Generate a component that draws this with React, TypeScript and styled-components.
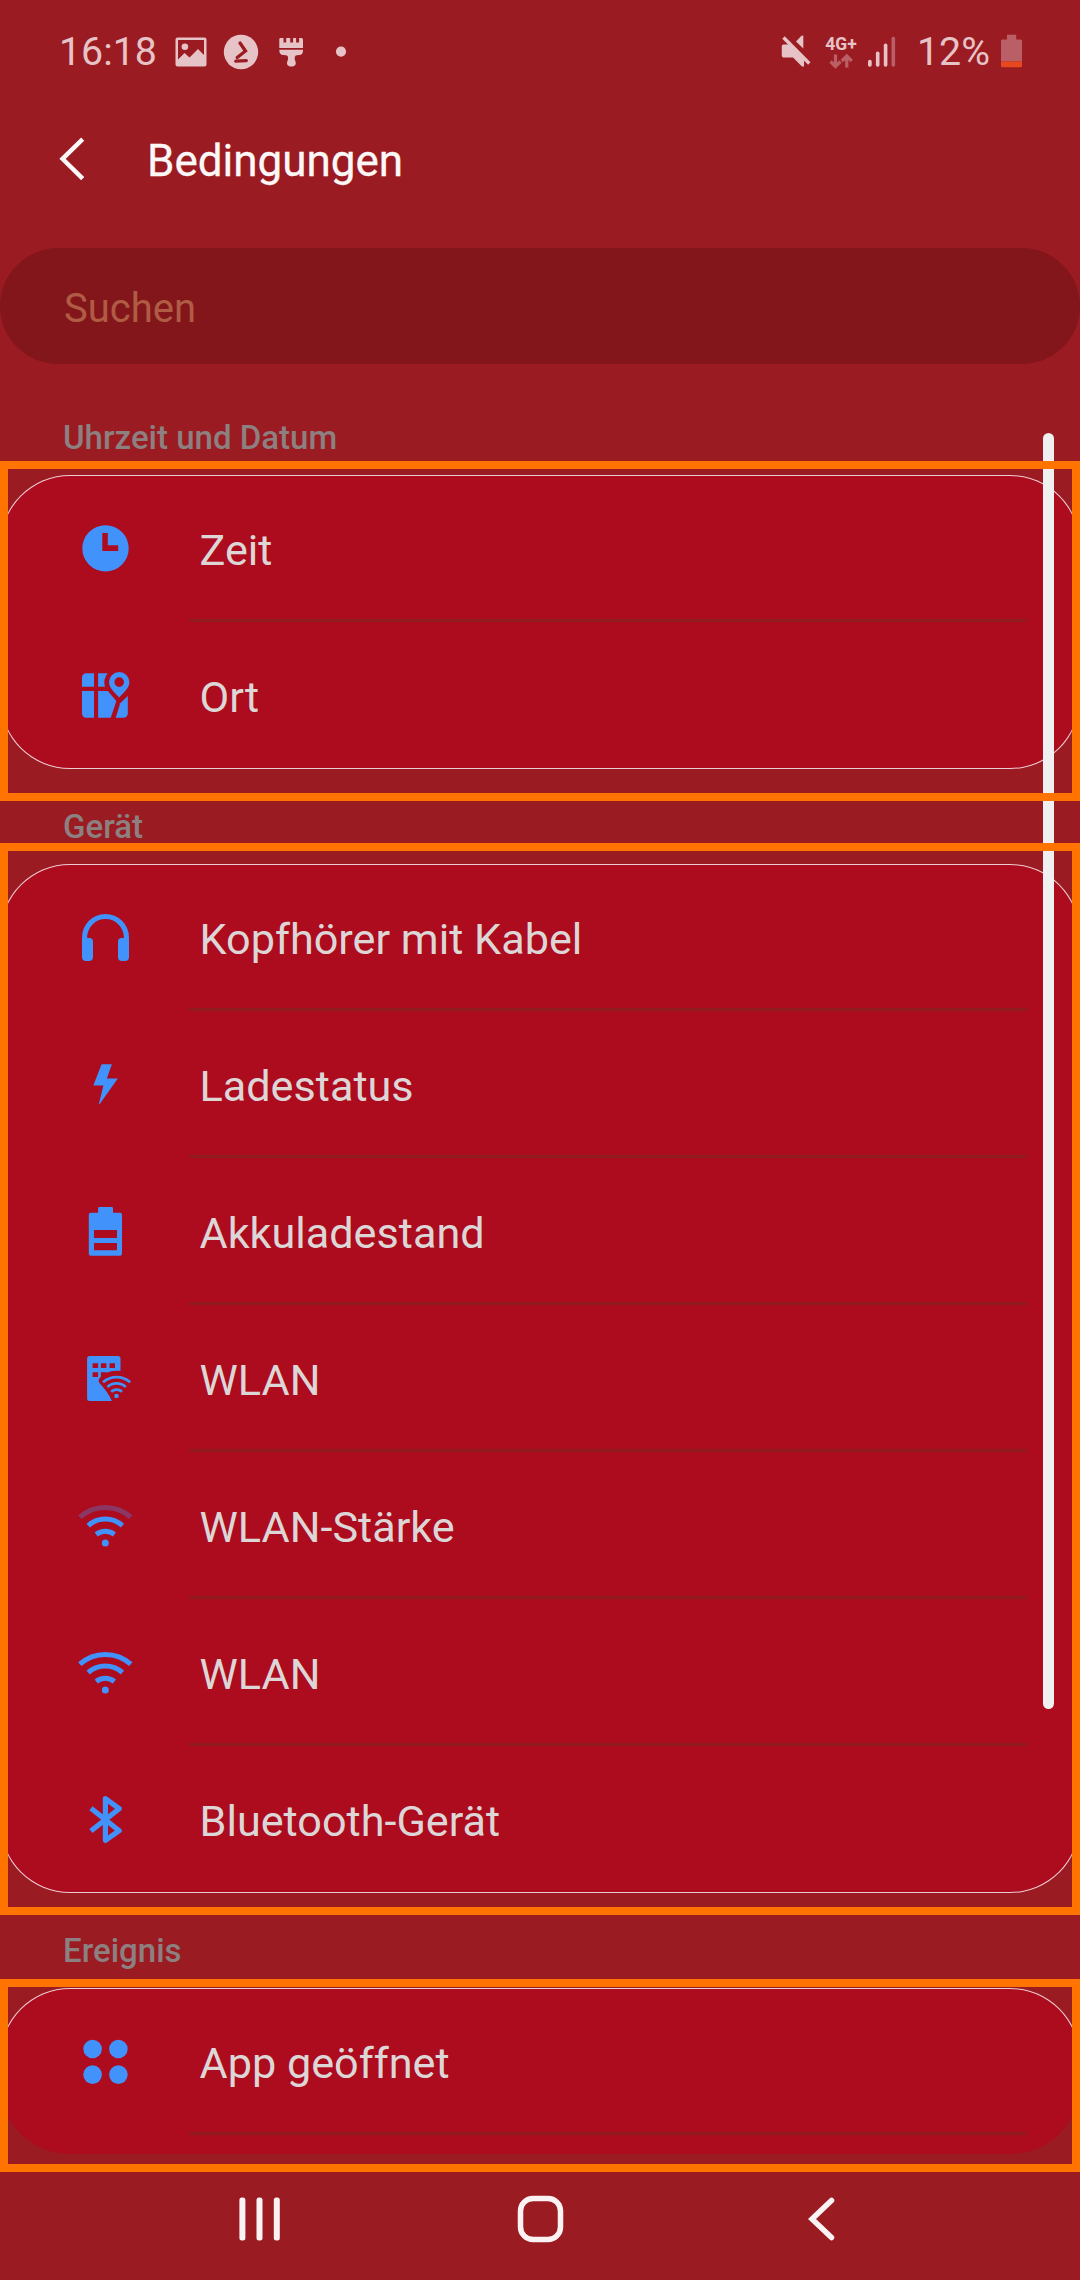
import React from "react";
import styled, { createGlobalStyle } from "styled-components";

const color = {
  page: "#9b1b22",
  card: "#ad0b1e",
  search: "#82161b",
  hint: "#b05c44",
  section: "#8c8080",
  label: "#dcd6d6",
  icon: "#4192fa",
  divider: "#901b20",
  outline: "#ecced2",
  status: "#e6c3c6",
  statusDim: "#bb5f66",
  frame: "#ff7300",
};

const GlobalStyle = createGlobalStyle`
  * { box-sizing: border-box; }
  body { margin: 0; background: ${color.page}; }
`;

const Screen = styled.div`
  width: 1080px;
  height: 2280px;
  display: flex;
  flex-direction: column;
  overflow: hidden;
  background: ${color.page};
  font-family: Roboto, "Noto Sans", sans-serif;
`;

const StatusBar = styled.header`
  height: 103px;
  flex: none;
  display: flex;
  align-items: center;
  justify-content: space-between;
  padding: 0 58px 0 59px;
  color: ${color.status};
  font-size: 39.3px;
  line-height: 47px;
`;

const StatusGroup = styled.div`
  display: flex;
  align-items: center;
`;

const Clock = styled.span`
  width: 116px;
  padding-top: 1px;
`;

const Percent = styled.span`
  width: 84px;
  padding-top: 1px;
`;

const Network = styled.div`
  width: 42px;
  height: 34px;
  margin-right: 6px;
  display: flex;
  flex-direction: column;
  align-items: center;
  justify-content: space-between;
  font-size: 17.5px;
  font-weight: 700;
  line-height: 18px;
`;

const TitleBar = styled.div`
  height: 112px;
  margin-bottom: 33px;
  flex: none;
  display: flex;
  align-items: center;
  gap: 59px;
  padding-left: 58px;
`;

const Title = styled.h1`
  margin: 0;
  color: #fdf8f8;
  font-size: 44px;
  font-weight: 400;
  -webkit-text-stroke: 0.3px #fdf8f8;
  line-height: 52px;
  padding-top: 3px;
`;

const SearchField = styled.div`
  height: 116px;
  flex: none;
  display: flex;
  align-items: center;
  padding: 4px 64px 0;
  border-radius: 58px;
  background: ${color.search};
  color: ${color.hint};
  font-size: 40px;
`;

const List = styled.main`
  position: relative;
  flex: none;
`;

const ScrollThumb = styled.div`
  position: absolute;
  z-index: 1;
  top: 69px;
  right: 26px;
  width: 11px;
  height: 1276px;
  border-radius: 6px;
  background: #f1f0f0;
`;

const SectionTitle = styled.h2<{ $height: number; $bottom: number }>`
  display: flex;
  align-items: flex-end;
  height: ${(p) => p.$height}px;
  margin: 0;
  padding: 0 63px ${(p) => p.$bottom}px;
  color: ${color.section};
  font-size: 33px;
  font-weight: 500;
  line-height: 32px;
`;

const Frame = styled.section<{ $top: number; $bottom: number }>`
  position: relative;
  padding: ${(p) => p.$top}px 0 ${(p) => p.$bottom}px;

  &::after {
    content: "";
    position: absolute;
    z-index: 2;
    inset: 0;
    border: 8px solid ${color.frame};
  }
`;

const CardClip = styled.div<{ $height: number }>`
  height: ${(p) => p.$height}px;
  overflow: hidden;
  border-radius: 0 0 70px 70px;
`;

const Card = styled.div`
  min-height: 294px;
  border-radius: 70px;
  background: ${color.card};
  box-shadow: inset 0 0 0 1px ${color.outline};
`;

const Row = styled.div`
  height: 147px;
  display: flex;
  align-items: center;
  padding-left: 75px;
`;

const RowBody = styled.div<{ $divided: boolean }>`
  flex: 1;
  height: 147px;
  margin: 0 53px;
  padding: 6px 0 0 10.5px;
  display: flex;
  align-items: center;
  border-bottom: 3px solid ${(p) => (p.$divided ? color.divider : "transparent")};
  color: ${color.label};
  font-size: 43.2px;
`;

const NavBar = styled.nav`
  height: 108px;
  flex: none;
  display: flex;
  align-items: center;
  justify-content: space-between;
  padding: 0 229px 15px 229px;
`;

const Glyph = ({ children }: { children: React.ReactNode }) => (
  <svg width="61" height="61" viewBox="0 0 61 61" fill={color.icon}>
    {children}
  </svg>
);

const ClockIcon = () => (
  <Glyph>
    <path
      fillRule="evenodd"
      d="M30.5 7.2a23.2 23.2 0 1 1 0 46.4a23.2 23.2 0 1 1 0-46.4zM27.3 15v18h15.9v-5.7H32.8V15z"
    />
  </Glyph>
);

const MapIcon = () => (
  <Glyph>
    <path d="M11.2 8.3H19v13.4H7V12.5a4.2 4.2 0 0 1 4.2-4.2z" />
    <path d="M23.1 8.3h9.5a15.5 15.5 0 0 0-2.7 13.4h-6.8z" />
    <path d="M7 26h12v26.7h-7.8a4.2 4.2 0 0 1-4.2-4.2z" />
    <path d="M23.1 26h9.7l8.6 10l-5.7 16.7H23.1z" />
    <path d="M52.8 31v17.5a4.2 4.2 0 0 1-4.2 4.2h-7.9L45.2 38.2z" />
    <path
      fillRule="evenodd"
      d="M44.2 6.9a10.2 10.2 0 0 1 10.2 10.2c0 6-5.6 10.4-10.2 15.3c-4.6-4.9-10.2-9.3-10.2-15.3a10.2 10.2 0 0 1 10.2-10.2zm0 5.4a4.8 4.8 0 1 0 0 9.6a4.8 4.8 0 1 0 0-9.6z"
    />
  </Glyph>
);

const HeadphonesIcon = () => (
  <Glyph>
    <path d="M9.6 35v-4.6a20.9 20.9 0 0 1 41.8 0V35" fill="none" stroke={color.icon} strokeWidth="5.1" />
    <path d="M7 31h7.5a3.5 3.5 0 0 1 3.5 3.5V50a4 4 0 0 1-4 4h-3a4 4 0 0 1-4-4z" />
    <path d="M54 31h-7.5a3.5 3.5 0 0 0-3.5 3.5V50a4 4 0 0 0 4 4h3a4 4 0 0 0 4-4z" />
  </Glyph>
);

const BoltIcon = () => (
  <Glyph>
    <path d="M26.6 10.3h10.3l-5.1 14.2h11L24.6 50.3h-.8l4.6-18.8H18.3z" />
  </Glyph>
);

const BatteryIcon = () => (
  <Glyph>
    <path
      fillRule="evenodd"
      d="M24.3 6h12.5a1.2 1.2 0 0 1 1.2 1.2v4.5h7a2 2 0 0 1 2 2v39a2 2 0 0 1-2 2H15.8a2 2 0 0 1-2-2v-39a2 2 0 0 1 2-2h7.3V7.2A1.2 1.2 0 0 1 24.3 6zM19 29v8h23v-8zM19 42v7.3h23V42z"
    />
  </Glyph>
);

const BuildingWifiIcon = () => (
  <Glyph>
    <path
      fillRule="evenodd"
      d="M14.6 8h28.4a2.5 2.5 0 0 1 2.5 2.5v12.5c-5.5-.8-10 .2-14.1 1.8V24.3h-5.5v4.5c-2.6 2.4-2.9 4.4-1.2 6.5c5 6 9.5 11 12.2 17.7H14.6a2.5 2.5 0 0 1-2.5-2.5v-40A2.5 2.5 0 0 1 14.6 8zM17.6 15.3v4.7h5.5v-4.7zM25.9 15.3v4.7h5.5v-4.7zM34.5 15.3v4.7H40v-4.7zM17.6 24.3V29h5.5v-4.7z"
    />
    <g fill="none" stroke={color.icon} strokeWidth="2.7">
      <path d="M28 34.3a20.5 20.5 0 0 1 27.2 0" />
      <path d="M32.4 38.9a13.8 13.8 0 0 1 18.4 0" />
      <path d="M36.2 43.7a8 8 0 0 1 10.8 0" />
    </g>
    <circle cx="41.5" cy="48" r="2.3" />
  </Glyph>
);

const WifiIcon = ({ weak = false }: { weak?: boolean }) => (
  <Glyph>
    <g fill="none" stroke={color.icon} strokeWidth="5">
      <path d="M4.8 22.2a38.2 38.2 0 0 1 51 0" stroke={weak ? "#8a3863" : color.icon} />
      <path d="M13.2 30.7a25.5 25.5 0 0 1 34.2 0" />
      <path d="M21.2 39.5a14.5 14.5 0 0 1 18.2 0" />
    </g>
    <circle cx="30.3" cy="48" r="3.5" />
  </Glyph>
);

const BluetoothIcon = () => (
  <Glyph>
    <path
      d="M15.9 19.2L44.2 41.7L30.4 51.3V9.7L44.2 19.7L15.9 42"
      fill="none"
      stroke={color.icon}
      strokeWidth="5.2"
      strokeLinejoin="round"
    />
  </Glyph>
);

const AppsIcon = () => (
  <Glyph>
    {[17.6, 43.4].map((x) =>
      [18, 43.6].map((y) => <circle key={`${x}-${y}`} cx={x} cy={y} r="9.3" />)
    )}
  </Glyph>
);

type Item = { label: string; icon: React.ReactNode };

const timeItems: Item[] = [
  { label: "Zeit", icon: <ClockIcon /> },
  { label: "Ort", icon: <MapIcon /> },
];

const deviceItems: Item[] = [
  { label: "Kopfhörer mit Kabel", icon: <HeadphonesIcon /> },
  { label: "Ladestatus", icon: <BoltIcon /> },
  { label: "Akkuladestand", icon: <BatteryIcon /> },
  { label: "WLAN", icon: <BuildingWifiIcon /> },
  { label: "WLAN-Stärke", icon: <WifiIcon weak /> },
  { label: "WLAN", icon: <WifiIcon /> },
  { label: "Bluetooth-Gerät", icon: <BluetoothIcon /> },
];

const eventItems: Item[] = [{ label: "App geöffnet", icon: <AppsIcon /> }];

const ItemCard = ({ items, continues = false }: { items: Item[]; continues?: boolean }) => (
  <Card>
    {items.map((item, i) => (
      <Row key={i}>
        {item.icon}
        <RowBody $divided={continues || i < items.length - 1}>{item.label}</RowBody>
      </Row>
    ))}
  </Card>
);

const NotificationIcons = () => (
  <svg width="176" height="40" viewBox="0 0 176 40" fill={color.status}>
    <path
      fillRule="evenodd"
      d="M2.5 5.5h27a2 2 0 0 1 2 2v25a2 2 0 0 1-2 2h-27a2 2 0 0 1-2-2v-25a2 2 0 0 1 2-2zM3 8v19.5l6.500-6.500l5 4.500l8.500-8.500l6 6V8z"
    />
    <circle cx="9.9" cy="14.8" r="3.3" />
    <circle cx="66" cy="20" r="17.2" />
    <path
      d="M65 11l5.5 8l-8.300 6.500M60.800 29.200l10.500-.5"
      fill="none"
      stroke={color.page}
      strokeWidth="3.3"
      strokeLinecap="round"
    />
    <path d="M105.500 6h3v4.500h2.700V6h4v4.500h2.900V6h3v4.500h3V6h2.400a1.500 1.500 0 0 1 1.500 1.500V16h-23.700V7.200A1.200 1.200 0 0 1 105.500 6z" />
    <path d="M104.300 17.700H128c0 3.800-1 5.200-4 5.400l-3.300.3c-1.500 1.600-1.100 3.600-.3 5.800c1.400 3.400-1 5.400-4 5.400s-5.400-2-4-5.400c.8-2.200 1.200-4.200-.3-5.800l-3.400-.3c-3-.2-4.400-1.600-4.400-5.400z" />
    <circle cx="166" cy="19.6" r="5.1" />
  </svg>
);

const MuteIcon = () => (
  <svg width="40" height="40" viewBox="0 0 40 40" fill={color.status}>
    <path d="M3.5 12.5H9L24 27.5V34.5h-2L13 25.500H3.500A1.800 1.800 0 0 1 1.800 23.700V14.300A1.800 1.800 0 0 1 3.500 12.500z" />
    <path d="M23.3 3.5V16.5L16 9.5L21.5 3.700z" />
    <path d="M3.5 5.5L29.3 31.5" stroke={color.status} strokeWidth="3.4" />
  </svg>
);

const DataArrows = () => (
  <svg width="24" height="15" viewBox="0 0 24 15" fill="none" stroke={color.statusDim} strokeWidth="3.2">
    <path d="M6.5 0.5V12M1.5 7.5L6.5 12.5L11.5 7.5" />
    <path d="M17.8 13.5V2M12.8 7L17.8 2L22.8 7" />
  </svg>
);

const SignalBars = () => (
  <svg width="49" height="40" viewBox="0 0 49 40" fill={color.status}>
    <rect x="0" y="27.8" width="3.7" height="7" rx="1.7" />
    <rect x="7.9" y="19.5" width="3.6" height="15.3" rx="1.7" />
    <rect x="15.8" y="11.5" width="3.6" height="23.3" rx="1.7" />
    <rect x="23.5" y="4.7" width="3.6" height="30.1" rx="1.7" fill={color.statusDim} />
  </svg>
);

const BatteryStatus = () => (
  <svg width="21" height="40" viewBox="0 0 21 40">
    <path
      d="M6 2.700h9.200V7.500H19.500A1.500 1.500 0 0 1 21 9V29.500H0V9A1.500 1.500 0 0 1 1.500 7.500H6z"
      fill={color.statusDim}
    />
    <path d="M0 29.500h21v4.200a1.500 1.500 0 0 1-1.500 1.500h-18A1.500 1.500 0 0 1 0 33.700z" fill="#e8481e" />
  </svg>
);

export default function App() {
  return (
    <Screen>
      <GlobalStyle />
      <StatusBar>
        <StatusGroup>
          <Clock>16:18</Clock>
          <NotificationIcons />
        </StatusGroup>
        <StatusGroup>
          <MuteIcon />
          <Network>
            <span>4G+</span>
            <DataArrows />
          </Network>
          <SignalBars />
          <Percent>12%</Percent>
          <BatteryStatus />
        </StatusGroup>
      </StatusBar>

      <TitleBar>
        <svg width="30" height="50" viewBox="0 0 30 50" fill="none" stroke="#fdf8f8" strokeWidth="4.4">
          <path d="M24.7 5.2L4.5 24.8L24.7 44.6" />
        </svg>
        <Title>Bedingungen</Title>
      </TitleBar>

      <SearchField>Suchen</SearchField>

      <List>
        <SectionTitle $height={97} $bottom={7}>Uhrzeit und Datum</SectionTitle>
        <Frame $top={14} $bottom={32}>
          <ItemCard items={timeItems} />
        </Frame>
        <SectionTitle $height={42} $bottom={0}>Gerät</SectionTitle>
        <Frame $top={21} $bottom={22}>
          <ItemCard items={deviceItems} />
        </Frame>
        <SectionTitle $height={64} $bottom={12}>Ereignis</SectionTitle>
        <Frame $top={9} $bottom={18}>
          <CardClip $height={166}>
            <ItemCard items={eventItems} continues />
          </CardClip>
        </Frame>
        <ScrollThumb />
      </List>

      <NavBar>
        <svg width="61" height="50" viewBox="0 0 61 50" fill="#fbf3f3">
          <rect x="10.4" y="3.5" width="6" height="43" rx="2.5" />
          <rect x="27.5" y="3.5" width="6" height="43" rx="2.5" />
          <rect x="44.8" y="3.5" width="6" height="43" rx="2.5" />
        </svg>
        <svg width="50" height="50" viewBox="0 0 50 50" fill="none" stroke="#fbf3f3" strokeWidth="5.5">
          <rect x="5.5" y="4.5" width="40" height="41" rx="12.5" />
        </svg>
        <svg width="61" height="50" viewBox="0 0 61 50" fill="none" stroke="#fbf3f3" strokeWidth="5.5" strokeLinecap="round">
          <path d="M41.5 6.5L22 25L41.5 43.5" />
        </svg>
      </NavBar>
    </Screen>
  );
}
